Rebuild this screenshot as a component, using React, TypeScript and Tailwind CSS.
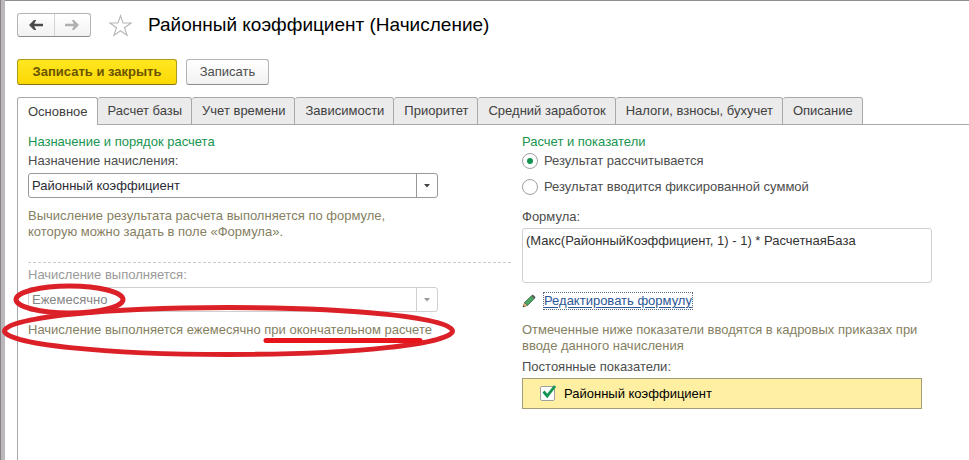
import React, { useState } from 'react';

const tabs = [
  'Основное',
  'Расчет базы',
  'Учет времени',
  'Зависимости',
  'Приоритет',
  'Средний заработок',
  'Налоги, взносы, бухучет',
  'Описание'
];

interface ComboProps {
  id: string;
  label: string;
  value: string;
  disabled?: boolean;
}

const Combo: React.FC<ComboProps> = ({ id, label, value, disabled }) => (
  <div className={disabled ? 'text-[#9a9a9a]' : 'text-[#4d4d4d]'}>
    <label htmlFor={id} className="block">{label}</label>
    <div
      className={`mt-1 flex h-[25px] w-full max-w-[410px] rounded-[3px] border bg-white ${
        disabled ? 'border-[#d0d0d0]' : 'border-[#999999]'
      }`}
    >
      <select
        id={id}
        disabled={disabled}
        className={`min-w-0 flex-1 appearance-none bg-transparent px-[3px] opacity-100 outline-none ${
          disabled ? 'text-[#858585]' : 'text-[#2b2b33]'
        }`}
      >
        <option>{value}</option>
      </select>
      <span
        className={`pointer-events-none flex w-[21px] items-center justify-center border-l ${
          disabled ? 'border-[#d0d0d0]' : 'border-[#999999]'
        }`}
      >
        <svg width="6" height="4" viewBox="0 0 6 4" fill={disabled ? '#999999' : '#444444'}>
          <path d="M0 0h6L3 3.5z" />
        </svg>
      </span>
    </div>
  </div>
);

interface RadioProps {
  label: string;
  checked: boolean;
  onChange: () => void;
}

const Radio: React.FC<RadioProps> = ({ label, checked, onChange }) => (
  <label className="flex h-4 items-center gap-1.5 text-[#4d4d4d]">
    <input
      type="radio"
      name="result"
      checked={checked}
      onChange={onChange}
      className="flex size-4 appearance-none items-center justify-center rounded-full border border-[#a0a0a0] bg-white before:size-[6px] before:rounded-full checked:before:bg-[#129450] checked:before:content-['']"
    />
    {label}
  </label>
);

const App: React.FC = () => {
  const [activeTab, setActiveTab] = useState(0);
  const [fixed, setFixed] = useState(false);
  const [constant, setConstant] = useState(true);

  return (
    <div className="flex min-h-screen border-l border-[#858385] bg-[#bcb7bb] pl-1 font-['Liberation_Sans',Arial,sans-serif] text-[13px] leading-4">
      <main className="flex min-w-0 flex-1 flex-col border-t border-[#8e8e8e] bg-white pl-3">
        <header className="mt-3 flex h-6 items-center">
          <div className="flex h-6 w-[74px] rounded-[3px] border border-[#b4b4b4] border-b-[#8c8c8c] bg-linear-to-b from-white to-[#f2f2f2]">
            <button aria-label="Назад" className="flex flex-1 items-center justify-center border-r border-[#d4d4d4]">
              <svg width="14" height="12" viewBox="0 0 14 12" fill="#4a4a4a">
                <path d="M0 6 5 1h2.200L5.200 4.700H14v2.600H5.200L7.200 11H5z" />
              </svg>
            </button>
            <button aria-label="Вперед" className="flex flex-1 items-center justify-center">
              <svg width="14" height="12" viewBox="0 0 14 12" fill="#b0b0b0">
                <path d="M14 6 9 1H6.800l2 3.700H0v2.600h8.800L6.800 11H9z" />
              </svg>
            </button>
          </div>
          <button aria-label="В избранное" className="ml-[17px]">
            <svg width="25" height="23" viewBox="0 0 25 23" fill="none" stroke="#b5b5b5" strokeWidth="1.1">
              <path d="M12.500 1.600 15 9h8.100l-6.600 4.800 2.600 7.600-6.600-4.700-6.600 4.700 2.600-7.600L1.900 9H10z" />
            </svg>
          </button>
          <h1 className="ml-[15px] text-[19px] leading-6 text-black">Районный коэффициент (Начисление)</h1>
        </header>

        <div className="mt-[22px] flex gap-[9px]">
          <button className="h-[26px] w-40 rounded-[3px] border border-[#b09a1c] border-b-[#857318] bg-linear-to-b from-[#ffe71f] to-[#fbd800] font-bold text-[#6a5400]">
            Записать и закрыть
          </button>
          <button className="h-[26px] w-[83px] rounded-[3px] border border-[#b4b4b4] border-b-[#8c8c8c] bg-linear-to-b from-white to-[#f2f2f2] text-[#4d4d4d]">
            Записать
          </button>
        </div>

        <div role="tablist" className="mt-3 flex">
          {tabs.map((tab, i) => (
            <button
              key={tab}
              role="tab"
              aria-selected={i === activeTab}
              onClick={() => setActiveTab(i)}
              className={`h-7 rounded-t-[3px] border-t border-r border-[#a9a9a9] pr-[9px] pl-[10px] whitespace-nowrap text-[#404040] first:border-l ${
                i === activeTab ? 'bg-white' : 'border-b bg-[#ebebeb]'
              }`}
            >
              {tab}
            </button>
          ))}
          <div className="flex-1 border-b border-[#a9a9a9]" />
        </div>

        <div
          role="tabpanel"
          className="grid flex-1 grid-cols-[21fr_19fr] content-start gap-[11px] border-l border-[#a9a9a9] px-[10px] pt-[9px]"
        >
          <section>
            <h2 className="mb-[3px] text-[#17954f]">Назначение и порядок расчета</h2>
            <Combo id="purpose" label="Назначение начисления:" value="Районный коэффициент" />
            <p className="mt-[10px] text-[#85805f]">
              Вычисление результата расчета выполняется по формуле,
              <br />
              которую можно задать в поле «Формула».
            </p>

            <div className="relative mt-[22px] border-t border-dashed border-[#cccccc] pt-1">
              <Combo id="period" label="Начисление выполняется:" value="Ежемесячно" disabled />
              <p className="mt-[10px] text-[#85805f]">Начисление выполняется ежемесячно при окончательном расчете</p>
              {/* hand-drawn marks over the period block */}
              <svg
                className="pointer-events-none absolute top-0 -left-7"
                width="460"
                height="100"
                viewBox="0 0 460 100"
                fill="none"
                stroke="#dc2028"
                strokeWidth="5"
              >
                <ellipse cx="69.5" cy="36.5" rx="53.5" ry="13.5" />
                <ellipse cx="228.5" cy="68" rx="224" ry="23.5" />
                <path d="M266 77.500h154" stroke="#e8141c" strokeLinecap="round" />
              </svg>
            </div>
          </section>

          <section>
            <h2 className="mb-[3px] text-[#17954f]">Расчет и показатели</h2>
            <div className="flex flex-col gap-[10px]">
              <Radio label="Результат рассчитывается" checked={!fixed} onChange={() => setFixed(false)} />
              <Radio label="Результат вводится фиксированной суммой" checked={fixed} onChange={() => setFixed(true)} />
            </div>
            <label htmlFor="formula" className="mt-[14px] block text-[#4d4d4d]">Формула:</label>
            <textarea
              id="formula"
              readOnly
              defaultValue="(Макс(РайонныйКоэффициент, 1) - 1) * РасчетнаяБаза"
              className="mt-[3px] block h-[55px] w-full max-w-[410px] resize-none rounded-[3px] border border-[#d0d0d0] px-[3px] py-1 text-[#333333] outline-none"
            />
            <div className="mt-[9px] flex items-center gap-[7px]">
              <svg width="14" height="14" viewBox="0 0 14 14">
                <path d="M1 13 2.500 8.500 5.500 11.500z" fill="#e8c08a" stroke="#8a6a3c" strokeWidth=".7" />
                <path d="M2.500 8.500 9.500 1.800 12.400 4.700 5.500 11.500z" fill="#4fa564" stroke="#3b6b47" strokeWidth=".8" />
                <path d="m9.500 1.800 1.300-1.200 2.800 2.700-1.200 1.400z" fill="#555555" />
                <path d="m1 13 .6-1.800 1.200 1.200z" fill="#333333" />
              </svg>
              <a href="#" className="border border-dotted border-[#5c6c80] text-[#2b5797] underline underline-offset-2">
                Редактировать формулу
              </a>
            </div>
            <p className="mt-3 text-[#85805f]">
              Отмеченные ниже показатели вводятся в кадровых приказах при
              <br />
              вводе данного начисления
            </p>
            <p className="mt-[5px] text-[#4d4d4d]">Постоянные показатели:</p>
            <div className="mt-[3px] flex h-[31px] max-w-[400px] items-center border border-[#a39c78] bg-[#feefa3] pl-[17px]">
              <label className="relative flex items-center gap-[9px] text-black">
                <input
                  type="checkbox"
                  checked={constant}
                  onChange={() => setConstant(!constant)}
                  className="peer size-[15px] appearance-none rounded-[2px] border border-[#a0a0a0] bg-white"
                />
                Районный коэффициент
                <svg
                  className="pointer-events-none invisible absolute -top-px left-0 peer-checked:visible"
                  width="17"
                  height="15"
                  viewBox="0 0 17 15"
                  fill="none"
                  stroke="#129450"
                  strokeWidth="2.800"
                >
                  <path d="m3.500 6.500 3.700 4.500L15 1" />
                </svg>
              </label>
            </div>
          </section>
        </div>
      </main>
    </div>
  );
};

export default App;
